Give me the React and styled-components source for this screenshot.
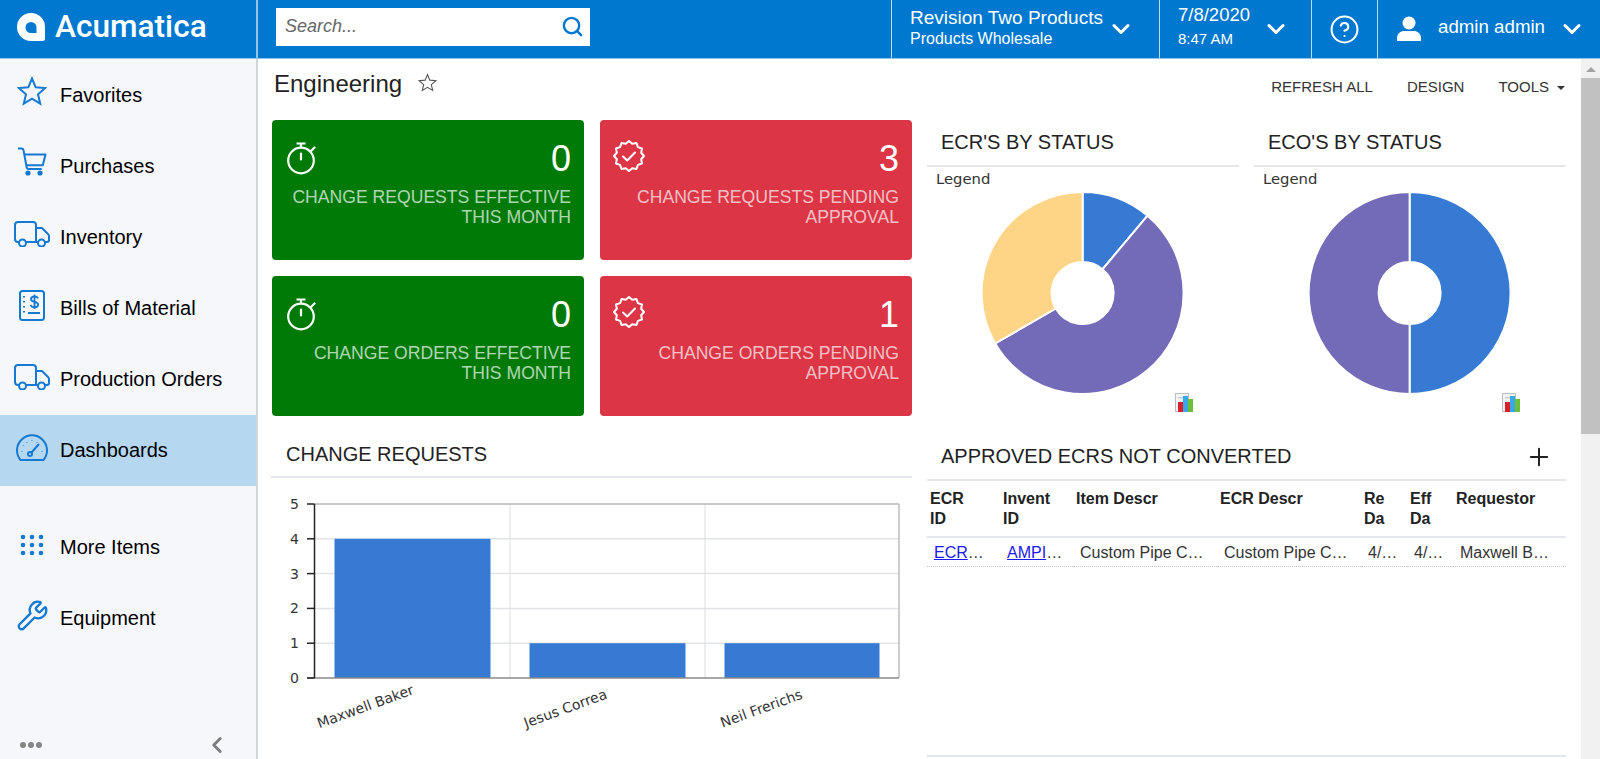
import React from 'react';
import styled, { createGlobalStyle } from 'styled-components';
import { ChevronDown, ChevronLeft, Search, Wrench, Plus, CircleHelp } from 'lucide-react';

const GlobalStyle = createGlobalStyle`
  html, body {
    margin: 0;
    padding: 0;
    height: 100%;
    overflow: hidden;
    background: #fff;
  }
  body {
    font-family: "Liberation Sans", Arial, sans-serif;
    color: #222;
  }
`;

const Page = styled.div`
  display: flex;
  flex-direction: column;
  height: 759px;
  overflow: hidden;
`;

const TopBar = styled.header`
  display: flex;
  flex: none;
  height: 58px;
  background: #0078cf;
  color: #fff;
  border-bottom: 1px solid #8fc4ec;
`;

const Brand = styled.div`
  display: flex;
  flex: none;
  align-items: center;
  gap: 10px;
  box-sizing: border-box;
  width: 258px;
  padding: 0 0 5px 17px;
  border-right: 2px solid #8fc4ec;
`;

const BrandName = styled.span`
  font-family: Roboto, sans-serif;
  font-weight: 500;
  font-size: 31.6px;
`;

const SearchSlot = styled.div`
  display: flex;
  flex: 1;
  align-items: flex-start;
  padding: 8px 0 0 18px;
`;

const SearchBox = styled.div`
  display: flex;
  align-items: center;
  justify-content: space-between;
  box-sizing: border-box;
  width: 314px;
  height: 38px;
  padding: 0 6px 2px 9px;
  background: #fff;
  color: #0078cf;
`;

const SearchHint = styled.span`
  font-size: 18px;
  font-style: italic;
  color: #666;
`;

const BarCell = styled.div`
  display: flex;
  flex: none;
  align-items: center;
  justify-content: ${p => p.$center ? 'center' : 'flex-start'};
  box-sizing: border-box;
  width: ${p => p.$width}px;
  padding-left: ${p => p.$pad || 0}px;
  border-left: 1px solid #b9dcf5;
`;

const CellText = styled.div`
  display: flex;
  flex-direction: column;
  flex: none;
  width: ${p => p.$width}px;
  margin-top: ${p => p.$top || -3}px;
`;

const CellMain = styled.span`
  margin-bottom: ${p => p.$gap || 0}px;
  font-size: ${p => p.$size}px;
  line-height: 22px;
`;

const CellSub = styled.span`
  font-size: ${p => p.$size}px;
  line-height: 20px;
`;

const UserName = styled.span`
  flex: none;
  width: 120px;
  margin: 0 0 4px 16px;
  font-size: 18.7px;
`;

const Body = styled.div`
  display: flex;
  flex: 1;
  min-height: 0;
`;

const Sidebar = styled.nav`
  display: flex;
  flex: none;
  flex-direction: column;
  box-sizing: border-box;
  width: 258px;
  padding-top: 1px;
  background: #f5f7fa;
  border-right: 2px solid #d3d6d9;
`;

const NavItem = styled.div`
  display: flex;
  flex: none;
  align-items: center;
  height: 71px;
  padding-left: 14px;
  margin-top: ${p => p.$gap || 0}px;
  font-size: 20px;
  color: #000;
  background: ${p => p.$active ? '#b6d7f0' : 'transparent'};
`;

const NavIcon = styled.span`
  display: flex;
  flex: none;
  align-items: center;
  justify-content: center;
  width: 36px;
  margin: 0 10px ${p => p.$lift || 6}px 0;
  color: #1479d2;
`;

const SideFooter = styled.div`
  display: flex;
  align-items: center;
  justify-content: space-between;
  height: 28px;
  margin-top: auto;
  padding: 0 26px 0 20px;
  color: #7c7c7c;
`;

const Dots = styled.div`
  display: flex;
  gap: 2px;
`;

const Dot = styled.i`
  width: 6px;
  height: 6px;
  border-radius: 50%;
  background: #858585;
`;

const Main = styled.main`
  display: flex;
  flex: 1;
  min-width: 0;
`;

const Content = styled.div`
  display: grid;
  flex: 1;
  grid-template-columns: 641px 639px;
  column-gap: 15px;
  align-content: start;
  padding-left: 13px;
  min-width: 0;
`;

const Column = styled.div`
  display: flex;
  flex-direction: column;
  min-width: 0;
`;

const TitleRow = styled.div`
  display: flex;
  align-items: center;
  gap: 16px;
  height: 61px;
  padding: 0 0 11px 3px;
  box-sizing: border-box;
`;

const PageTitle = styled.h1`
  margin: 0;
  font-size: 24px;
  font-weight: 400;
  color: #222;
`;

const FavStar = styled.span`
  display: flex;
  margin-top: -4px;
  color: #555;
`;

const TileGrid = styled.div`
  display: grid;
  grid-template-columns: 312px 312px;
  gap: 16px;
  margin-left: 1px;
`;

const Tile = styled.div`
  box-sizing: border-box;
  height: 140px;
  padding: 20px 13px 0 15px;
  border-radius: 4px;
  background: ${p => p.$tone};
  text-align: right;
`;

const TileTop = styled.div`
  display: flex;
  align-items: center;
  justify-content: space-between;
  height: 36px;
  color: #fff;
`;

const TileNumber = styled.span`
  margin-top: 2px;
  font-size: 36px;
`;

const TileLabel = styled.div`
  margin-top: 11px;
  font-size: 17.6px;
  line-height: 20px;
  color: rgba(255, 255, 255, 0.7);
`;

const SectionHead = styled.div`
  display: flex;
  align-items: ${p => p.$bottom ? 'flex-end' : 'center'};
  justify-content: space-between;
  box-sizing: border-box;
  height: ${p => p.$height}px;
  padding: ${p => p.$bottom ? '0 13px 10px 15px' : '2px 13px 0 14px'};
  border-bottom: 2px solid #e3e7ec;
  font-size: 20px;
  color: #222;
`;

const PiesRow = styled.div`
  display: grid;
  grid-template-columns: 312px 312px;
  column-gap: 15px;
`;

const ToolRow = styled.div`
  display: flex;
  align-items: center;
  justify-content: flex-end;
  gap: 34px;
  box-sizing: border-box;
  height: 59px;
  padding: 0 1px 4px 0;
  font-size: 15px;
  color: #333;
`;

const ToolCaret = styled.span`
  display: inline-block;
  width: 0;
  height: 0;
  margin-left: 8px;
  vertical-align: 2px;
  border-left: 4px solid transparent;
  border-right: 4px solid transparent;
  border-top: 4px solid #333;
`;

const PieSvg = styled.svg`
  display: block;
  width: 312px;
  height: 265px;
`;

const ChartSvg = styled.svg`
  display: block;
  width: 641px;
  height: 281px;
`;

const SvgLabel = styled.text`
  font-family: "DejaVu Sans", sans-serif;
  font-size: ${p => p.$size || 13}px;
  fill: #333;
`;

const TableFrame = styled.div`
  height: 276px;
  border-bottom: 2px solid #e3e7ec;
  box-sizing: border-box;
`;

const Table = styled.table`
  width: 639px;
  table-layout: fixed;
  border-collapse: collapse;
  font-size: 16px;
`;

const HeadCell = styled.th`
  box-sizing: border-box;
  padding: 8px 0 7px 3px;
  font-weight: 700;
  line-height: 20px;
  text-align: left;
  vertical-align: top;
  white-space: pre-line;
  color: #222;
  border-bottom: 2px solid #e3e7ec;
`;

const DataCell = styled.td`
  box-sizing: border-box;
  height: 29px;
  padding: 2px ${p => p.$tight ? 7 : 10}px 0 7px;
  overflow: hidden;
  white-space: nowrap;
  text-overflow: ellipsis;
  color: #333;
  border-bottom: 1px dotted #c4c4c4;
`;

const CellLink = styled.a`
  color: #1a1aee;
  text-decoration: underline;
`;

const ScrollTrack = styled.div`
  display: flex;
  flex: none;
  flex-direction: column;
  align-items: center;
  width: 19px;
  background: #f1f1f1;
`;

const ScrollArrow = styled.span`
  width: 0;
  height: 0;
  margin: 8px 0 6px;
  border-left: 5px solid transparent;
  border-right: 5px solid transparent;
  border-bottom: 5px solid #a3a3a3;
`;

const ScrollThumb = styled.div`
  width: 19px;
  height: 356px;
  background: #c1c1c1;
`;

const SealWrap = styled.span`
  display: flex;
  margin: -4px 0 0 -2px;
`;

const Logo = () => (
  <svg width="28" height="28" viewBox="0 0 28 28">
    <path fill="#fff" fillRule="evenodd" d="M14 0a14 14 0 0 1 14 14v11.5a2.500 2.500 0 0 1-2.500 2.500H14A14 14 0 0 1 14 0zM14 9a5.500 5.500 0 0 0-5.500 5.500A5.500 5.500 0 0 0 14 20h5.500v-5.500A5.500 5.500 0 0 0 14 9z" />
  </svg>
);

const UserIcon = () => (
  <svg width="26" height="26" viewBox="0 0 26 26" fill="#fff">
    <circle cx="13" cy="7" r="6.500" />
    <path d="M1 25v-3c0-4.500 4-7 7-7h10c3 0 7 2.500 7 7v3z" />
  </svg>
);

const StarIcon = ({ size, width }) => (
  <svg width={size} height={size} viewBox="0 0 30 30" fill="none" stroke="currentColor" strokeWidth={width} strokeLinejoin="miter">
    <path d="M15 2.500l3.700 8.800 9.500.8-7.200 6.200 2.200 9.300-8.200-5-8.200 5 2.200-9.300-7.200-6.200 9.500-.8z" />
  </svg>
);

const CartIcon = () => (
  <svg width="30" height="29" viewBox="0 0 30 29" fill="none" stroke="currentColor" strokeWidth="2" strokeLinejoin="round">
    <path d="M1 1.500h3.500a2 2 0 0 1 2 1.600l3.200 17.400a2 2 0 0 0 2 1.600h13" />
    <path d="M7 7.500h21.500l-2.700 10.800H9.500" />
    <circle cx="11" cy="26" r="1.600" fill="currentColor" />
    <circle cx="23" cy="26" r="1.600" fill="currentColor" />
  </svg>
);

const TruckIcon = () => (
  <svg width="36" height="26" viewBox="0 0 36 26" fill="none" stroke="currentColor" strokeWidth="2" strokeLinejoin="round">
    <path d="M5 21H4a3 3 0 0 1-3-3V4a3 3 0 0 1 3-3h15a3 3 0 0 1 3 3v17M12 21h12" />
    <path d="M22 7h6l6 6a3 3 0 0 1 1 2v4a2 2 0 0 1-2 2h-2" />
    <circle cx="8.500" cy="22" r="3.500" />
    <circle cx="27.500" cy="22" r="3.500" />
  </svg>
);

const BillIcon = () => (
  <svg width="26" height="31" viewBox="0 0 26 31" fill="none" stroke="currentColor" strokeWidth="2">
    <rect x="1" y="1" width="24" height="29" rx="2.500" />
    <path d="M5 6v1.500M5 11v1.500M5 16v1.500M5 21v1.500" />
    <path d="M9 23h12" />
    <path d="M19 8.500c-.5-1.500-1.800-2-3.500-2-2 0-3.500 1-3.500 2.700 0 3.600 7.200 1.800 7.200 5.400 0 1.800-1.700 2.700-3.700 2.700s-3.500-.8-3.800-2.400M15.500 4.500v14.500" strokeWidth="1.800" />
  </svg>
);

const GaugeIcon = () => (
  <svg width="32" height="27" viewBox="0 0 32 27" fill="none" stroke="currentColor" strokeWidth="2">
    <path d="M4.500 26A15 15 0 1 1 27.500 26z" strokeLinejoin="round" />
    <path d="M6 17v.5M7.500 11.500v.5M11 8v.5M16 6v.5M21 8v.5M26 17v.5" strokeWidth="1.500" />
    <circle cx="14" cy="20" r="2" />
    <path d="M15.500 18.500L23 10" />
  </svg>
);

const GridDots = () => (
  <svg width="24" height="22" viewBox="0 0 24 22" fill="currentColor">
    {[3, 11, 19].map(y => [3, 12, 21].map(x => <circle key={`${x}-${y}`} cx={x} cy={y} r="2.300" />))}
  </svg>
);

const Stopwatch = () => (
  <svg width="29" height="33" viewBox="0 0 29 33" fill="none" stroke="#fff" strokeWidth="2.200">
    <circle cx="14" cy="18.500" r="12.800" />
    <path d="M9.500 1.500h9M14 1.500v4" />
    <path d="M14 11.500v6" strokeLinecap="round" />
    <path d="M24 9l3.500-3.500" strokeLinecap="round" />
  </svg>
);

// scalloped seal outline for the pending tiles
const sealPoints = () => {
  const pts = [];
  for (let i = 0; i < 24; i++) {
    const r = i % 2 === 0 ? 15 : 12.6;
    const a = (i * 15) * Math.PI / 180;
    pts.push(`${(16 + r * Math.cos(a)).toFixed(2)},${(16 + r * Math.sin(a)).toFixed(2)}`);
  }
  return pts.join(' ');
};

const SealIcon = () => (
  <SealWrap>
    <svg width="32" height="32" viewBox="0 0 32 32" fill="none" stroke="#fff" strokeWidth="2" strokeLinejoin="round">
      <polygon points={sealPoints()} />
      <path d="M10 16.500l4.200 4 7.800-8" strokeLinecap="round" />
    </svg>
  </SealWrap>
);

const ReportIcon = ({ x, y }) => (
  <g transform={`translate(${x} ${y})`}>
    <rect x="0.500" y="0.500" width="13" height="18" fill="#f2f3f5" stroke="#b8bdc4" />
    <rect x="3" y="4" width="8" height="1.500" fill="#c9ced6" />
    <rect x="3" y="9" width="5" height="10" fill="#d81f2a" />
    <rect x="8" y="3" width="5" height="16" fill="#3aa7e8" />
    <rect x="13" y="6" width="5" height="13" fill="#6cbf3a" />
  </g>
);

const polar = (cx, cy, r, deg) => {
  const a = (deg - 90) * Math.PI / 180;
  return [cx + r * Math.cos(a), cy + r * Math.sin(a)];
};

const slicePath = (cx, cy, r, r0, from, to) => {
  const [x1, y1] = polar(cx, cy, r, from);
  const [x2, y2] = polar(cx, cy, r, to);
  const [x3, y3] = polar(cx, cy, r0, to);
  const [x4, y4] = polar(cx, cy, r0, from);
  const big = to - from > 180 ? 1 : 0;
  return `M${x1} ${y1}A${r} ${r} 0 ${big} 1 ${x2} ${y2}L${x3} ${y3}A${r0} ${r0} 0 ${big} 0 ${x4} ${y4}Z`;
};

const Donut = ({ slices }) => (
  <PieSvg viewBox="0 0 312 265">
    <SvgLabel x="9" y="17" $size={14.8}>Legend</SvgLabel>
    {slices.map(s => (
      <path key={s.from} d={slicePath(155.6, 126, 101, 31, s.from, s.to)} fill={s.color} stroke="#fff" strokeWidth="2" />
    ))}
    <ReportIcon x={248} y={226} />
  </PieSvg>
);

const BarChart = () => {
  const ticks = [0, 1, 2, 3, 4, 5];
  const y = v => 200 - v * 34.8;
  const bars = [
    { x: 63.500, w: 156, v: 4 },
    { x: 258.500, w: 156, v: 1 },
    { x: 453.500, w: 155, v: 1 },
  ];
  const labels = [
    { name: 'Maxwell Baker', x: 96, y: 233 },
    { name: 'Jesus Correa', x: 296, y: 235 },
    { name: 'Neil Frerichs', x: 492, y: 235 },
  ];
  return (
    <ChartSvg viewBox="0 0 641 281">
      {ticks.slice(1).map(t => <line key={t} x1="43.500" x2="628" y1={y(t)} y2={y(t)} stroke="#e2e3e6" strokeWidth="1.500" />)}
      <line x1="239" x2="239" y1="26" y2="200" stroke="#dcdde0" />
      <line x1="434" x2="434" y1="26" y2="200" stroke="#dcdde0" />
      <line x1="628" x2="628" y1="26" y2="200" stroke="#bcbcbc" strokeWidth="1.500" />
      <line x1="43.500" x2="628" y1="26" y2="26" stroke="#bcbcbc" strokeWidth="1.500" />
      {bars.map(b => <rect key={b.x} x={b.x} y={y(b.v)} width={b.w} height={200 - y(b.v)} fill="#377ad3" />)}
      <line x1="36" x2="628" y1="200" y2="200" stroke="#8a8a8a" strokeWidth="1.500" />
      <line x1="43.500" x2="43.500" y1="26" y2="200" stroke="#222" strokeWidth="1.500" />
      {ticks.map(t => (
        <g key={t}>
          <line x1="36" x2="43.500" y1={y(t)} y2={y(t)} stroke="#222" strokeWidth="1.500" />
          <SvgLabel x="28" y={y(t) + 5} textAnchor="end" $size={14}>{t}</SvgLabel>
        </g>
      ))}
      {labels.map(l => (
        <SvgLabel key={l.name} x={l.x} y={l.y} $size={14} textAnchor="middle" transform={`rotate(-20 ${l.x} ${l.y})`}>{l.name}</SvgLabel>
      ))}
    </ChartSvg>
  );
};

const navTop = [
  { label: 'Favorites', lift: 9, icon: <StarIcon size={30} width={2} /> },
  { label: 'Purchases', lift: 10, icon: <CartIcon /> },
  { label: 'Inventory', lift: 7, icon: <TruckIcon /> },
  { label: 'Bills of Material', icon: <BillIcon /> },
  { label: 'Production Orders', icon: <TruckIcon /> },
  { label: 'Dashboards', icon: <GaugeIcon />, active: true },
];

const tiles = [
  { tone: '#007a07', number: 0, label: 'CHANGE REQUESTS EFFECTIVE THIS MONTH', icon: <Stopwatch /> },
  { tone: '#dc3545', number: 3, label: 'CHANGE REQUESTS PENDING APPROVAL', icon: <SealIcon /> },
  { tone: '#007a07', number: 0, label: 'CHANGE ORDERS EFFECTIVE THIS MONTH', icon: <Stopwatch /> },
  { tone: '#dc3545', number: 1, label: 'CHANGE ORDERS PENDING APPROVAL', icon: <SealIcon /> },
];

const columns = [
  { title: 'ECR\nID', width: 73 },
  { title: 'Invent\nID', width: 73 },
  { title: 'Item Descr', width: 144 },
  { title: 'ECR Descr', width: 144 },
  { title: 'Re\nDa', width: 46 },
  { title: 'Eff\nDa', width: 46 },
  { title: 'Requestor', width: 113 },
];

const App = () => (
  <Page>
    <GlobalStyle />
    <TopBar>
      <Brand>
        <Logo />
        <BrandName>Acumatica</BrandName>
      </Brand>
      <SearchSlot>
        <SearchBox>
          <SearchHint>Search...</SearchHint>
          <Search size={23} strokeWidth={2.500} />
        </SearchBox>
      </SearchSlot>
      <BarCell $width={268} $pad={18}>
        <CellText $width={197}>
          <CellMain $size={19}>Revision Two Products</CellMain>
          <CellSub $size={16}>Products Wholesale</CellSub>
        </CellText>
        <ChevronDown size={28} strokeWidth={2.600} />
      </BarCell>
      <BarCell $width={152} $pad={18}>
        <CellText $width={84} $top={-6}>
          <CellMain $size={18.5} $gap={3}>7/8/2020</CellMain>
          <CellSub $size={15}>8:47 AM</CellSub>
        </CellText>
        <ChevronDown size={28} strokeWidth={2.600} />
      </BarCell>
      <BarCell $width={66} $center>
        <CircleHelp size={31} strokeWidth={1.600} />
      </BarCell>
      <BarCell $width={223} $pad={18}>
        <UserIcon />
        <UserName>admin admin</UserName>
        <ChevronDown size={28} strokeWidth={2.600} />
      </BarCell>
    </TopBar>
    <Body>
      <Sidebar>
        {navTop.map(item => (
          <NavItem key={item.label} $active={item.active}>
            <NavIcon $lift={item.lift}>{item.icon}</NavIcon>
            {item.label}
          </NavItem>
        ))}
        <NavItem $gap={26}>
          <NavIcon><GridDots /></NavIcon>
          More Items
        </NavItem>
        <NavItem>
          <NavIcon><Wrench size={33} strokeWidth={1.700} /></NavIcon>
          Equipment
        </NavItem>
        <SideFooter>
          <Dots><Dot /><Dot /><Dot /></Dots>
          <ChevronLeft size={26} strokeWidth={2.600} />
        </SideFooter>
      </Sidebar>
      <Main>
        <Content>
          <Column>
            <TitleRow>
              <PageTitle>Engineering</PageTitle>
              <FavStar><StarIcon size={19} width={1.700} /></FavStar>
            </TitleRow>
            <TileGrid>
              {tiles.map(t => (
                <Tile key={t.label} $tone={t.tone}>
                  <TileTop>
                    {t.icon}
                    <TileNumber>{t.number}</TileNumber>
                  </TileTop>
                  <TileLabel>{t.label}</TileLabel>
                </Tile>
              ))}
            </TileGrid>
            <SectionHead $height={62} $bottom>CHANGE REQUESTS</SectionHead>
            <BarChart />
          </Column>
          <Column>
            <ToolRow>
              <span>REFRESH ALL</span>
              <span>DESIGN</span>
              <span>TOOLS<ToolCaret /></span>
            </ToolRow>
            <PiesRow>
              <div>
                <SectionHead $height={49}>ECR'S BY STATUS</SectionHead>
                <Donut slices={[
                  { from: 0, to: 40, color: '#377ad3' },
                  { from: 40, to: 240, color: '#736bb7' },
                  { from: 240, to: 360, color: '#fed587' },
                ]} />
              </div>
              <div>
                <SectionHead $height={49}>ECO'S BY STATUS</SectionHead>
                <Donut slices={[
                  { from: 0, to: 180, color: '#377ad3' },
                  { from: 180, to: 360, color: '#736bb7' },
                ]} />
              </div>
            </PiesRow>
            <SectionHead $height={49}>
              APPROVED ECRS NOT CONVERTED
              <Plus size={28} strokeWidth={1.700} color="#222" />
            </SectionHead>
            <TableFrame>
              <Table>
                <colgroup>
                  {columns.map(c => <col key={c.title} width={c.width} />)}
                </colgroup>
                <thead>
                  <tr>
                    {columns.map(c => <HeadCell key={c.title}>{c.title}</HeadCell>)}
                  </tr>
                </thead>
                <tbody>
                  <tr>
                    <DataCell><CellLink>ECR000012</CellLink></DataCell>
                    <DataCell><CellLink>AMPIPE0001</CellLink></DataCell>
                    <DataCell>Custom Pipe Cutter Assembly</DataCell>
                    <DataCell>Custom Pipe Cutter Assembly</DataCell>
                    <DataCell $tight>4/15/2020</DataCell>
                    <DataCell $tight>4/15/2020</DataCell>
                    <DataCell>Maxwell Baker</DataCell>
                  </tr>
                </tbody>
              </Table>
            </TableFrame>
          </Column>
        </Content>
        <ScrollTrack>
          <ScrollArrow />
          <ScrollThumb />
        </ScrollTrack>
      </Main>
    </Body>
  </Page>
);

export default App;
